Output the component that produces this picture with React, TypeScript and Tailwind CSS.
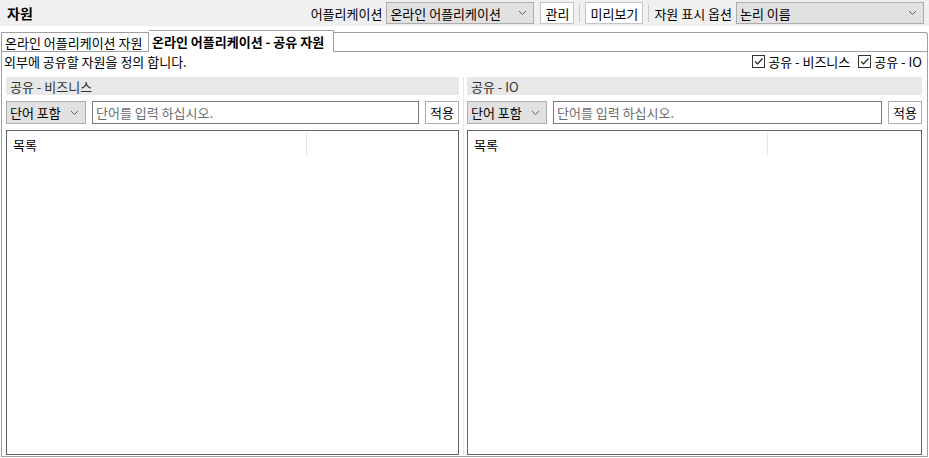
import React from "react";

function Chevron() {
  return (
    <svg width="9" height="6" viewBox="0 0 9 6" className="shrink-0">
      <path d="M1 1l3.5 3.5L8 1" fill="none" stroke="#606060" strokeWidth="1" />
    </svg>
  );
}

function Check() {
  return (
    <span className="flex h-[13px] w-[13px] items-center justify-center border border-[#333333] bg-white">
      <svg width="11" height="11" viewBox="0 0 11 11">
        <path d="M2 5.5l2.5 2.5L9.5 2.5" fill="none" stroke="#222222" strokeWidth="1.2" />
      </svg>
    </span>
  );
}

function SharePanel({ title, width }: { title: string; width: string }) {
  return (
    <div className={`flex h-full flex-col ${width}`}>
      <div className="flex h-[18px] items-center bg-[#e8e8e8] pl-[4px] text-[#333333]">{title}</div>
      <div className="mt-[6px] flex h-[23px] items-stretch">
        <div className="flex w-[80px] items-center justify-between border border-[#adadad] bg-[#e1e1e1] pl-[3px] pr-[6px]">
          <span>단어 포함</span>
          <Chevron />
        </div>
        <input
          placeholder="단어를 입력 하십시오."
          className="ml-[6px] min-w-0 flex-1 border border-[#7a7a7a] px-[3px] text-[13px] outline-none placeholder:text-[#6d6d6d]"
        />
        <button className="ml-[6px] w-[34px] border border-[#adadad] bg-white">적용</button>
      </div>
      <div className="mt-[6px] flex-1 border border-[#646464] bg-white">
        <div className="mt-[1px] flex h-[24px] w-[300px] items-center border-r border-[#e5e5e5] pl-[6px]">목록</div>
      </div>
    </div>
  );
}

export default function App() {
  return (
    <div className="h-[458px] w-[929px] overflow-hidden bg-white font-['Noto_Sans_CJK_KR',sans-serif] text-[13px] leading-none text-black">
      {/* toolbar */}
      <div className="flex h-[26px] items-center bg-[#f0f0f0]">
        <span className="pl-[7px] text-[14px] font-bold">자원</span>
        <div className="ml-auto flex items-center pr-[5px]">
          <span className="mr-[4px]">어플리케이션</span>
          <div className="flex h-[22px] w-[148px] items-center justify-between border border-[#adadad] bg-[#e1e1e1] pl-[3px] pr-[6px]">
            <span>온라인 어플리케이션</span>
            <Chevron />
          </div>
          <button className="ml-[6px] h-[22px] w-[34px] border border-[#c4c4c4] bg-white">관리</button>
          <span className="mx-[5px] h-[17px] w-px bg-[#c8c8c8]" />
          <button className="h-[22px] w-[58px] border border-[#c4c4c4] bg-white">미리보기</button>
          <span className="mx-[5px] h-[17px] w-px bg-[#c8c8c8]" />
          <span className="mr-[4px]">자원 표시 옵션</span>
          <div className="flex h-[22px] w-[188px] items-center justify-between border border-[#adadad] bg-[#e1e1e1] pl-[3px] pr-[6px]">
            <span>논리 이름</span>
            <Chevron />
          </div>
        </div>
      </div>

      {/* tabs */}
      <div className="mt-[4px] flex h-[21px] items-end pl-[1px] pr-[1px]">
        <div className="flex h-[19px] w-[148px] items-center border-l border-r border-t border-[#a0a0a0] pl-[3px]">
          온라인 어플리케이션 자원
        </div>
        <div className="relative z-10 -mb-px flex h-[22px] w-[185px] items-center border-r border-t border-[#a0a0a0] bg-white pl-[3px] font-bold">
          온라인 어플리케이션 - 공유 자원
        </div>
        <div className="h-[19px] flex-1 rounded-tr-[3px] border-r border-t border-[#a0a0a0]" />
      </div>

      {/* pane */}
      <div className="ml-[1px] flex h-[406px] w-[927px] flex-col border border-[#a0a0a0]">
        <div className="flex h-[19px] items-center justify-between pl-[2px] pr-[5px]">
          <span>외부에 공유할 자원을 정의 합니다.</span>
          <div className="flex items-center">
            <Check />
            <span className="ml-[3px]">공유 - 비즈니스</span>
            <span className="ml-[8px]">
              <Check />
            </span>
            <span className="ml-[3px]">공유 - IO</span>
          </div>
        </div>
        <div className="mt-[6px] flex h-[378px] pl-[4px]">
          <SharePanel title="공유 - 비즈니스" width="w-[453px]" />
          <div className="flex w-[8px] justify-center">
            <div className="h-full w-px bg-[#e6e6e6]" />
          </div>
          <SharePanel title="공유 - IO" width="w-[455px]" />
        </div>
      </div>
    </div>
  );
}
